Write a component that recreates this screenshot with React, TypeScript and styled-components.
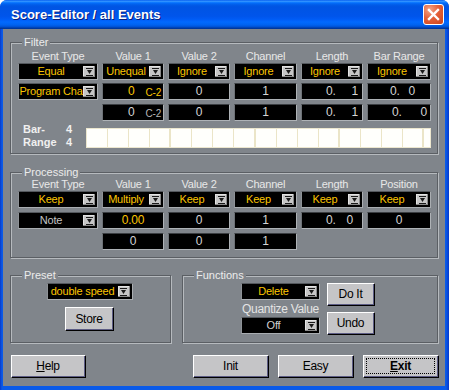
import React from "react";
import styled, { createGlobalStyle } from "styled-components";

const GRAY = "#80858b";
const YELLOW = "#fcc600";
const PALE = "#d4d4d4";
const FONT = `"Liberation Sans", Arial, sans-serif`;

const GlobalStyle = createGlobalStyle`
  html, body { margin: 0; padding: 0; background: #ffffff; }
  body { font-family: ${FONT}; }
`;

const Window = styled.div`
  width: 449px;
  height: 390px;
  display: flex;
  flex-direction: column;
  background: linear-gradient(to right, #0838c8 0, #0a5ae8 2px, #0a5ae8 446px, #0838c8 449px);
  border-radius: 7px 7px 0 0;
  overflow: hidden;
`;

const TitleBar = styled.div`
  height: 29px;
  flex: none;
  display: flex;
  align-items: center;
  justify-content: space-between;
  padding: 0 5px 0 11px;
  background: linear-gradient(
    to bottom,
    #0058ee 0%,
    #3593ff 4%,
    #288eff 6%,
    #127dff 8%,
    #036ffc 10%,
    #0262ee 14%,
    #0057e5 20%,
    #0054e3 24%,
    #0055eb 56%,
    #005bf5 66%,
    #026afe 76%,
    #0062ef 86%,
    #0052d6 92%,
    #0040ab 96%,
    #003092 100%
  );
`;

const Title = styled.span`
  font: bold 13px ${FONT};
  color: #ffffff;
  text-shadow: 1px 1px 0 #0a1e7a;
`;

const CloseBtn = styled.div`
  width: 21px;
  height: 21px;
  box-sizing: border-box;
  border: 1px solid #ffffff;
  border-radius: 3px;
  background: radial-gradient(circle at 30% 25%, #f4a486 0%, #e4613a 45%, #cc4219 100%);
  display: flex;
  align-items: center;
  justify-content: center;
`;

const Client = styled.div`
  flex: 1;
  margin: 0 4px 4px 3px;
  background: ${GRAY};
  display: flex;
  flex-direction: column;
  padding: 13px 7px 8px 7px;
`;

const Group = styled.div<{ $pt: number; $pb?: number; $mt?: number; $h?: number }>`
  position: relative;
  border: 1px solid #5b5f64;
  box-shadow: inset 1px 1px 0 #b6babe, 1px 1px 0 #b6babe;
  padding: ${(p) => p.$pt}px 6px ${(p) => p.$pb ?? 0}px 7px;
  margin-top: ${(p) => p.$mt ?? 0}px;
  ${(p) => (p.$h ? `height: ${p.$h}px; box-sizing: border-box;` : "")}
`;

const Legend = styled.span`
  position: absolute;
  top: -7px;
  left: 11px;
  padding: 0 2px;
  background: ${GRAY};
  color: #ececec;
  font-size: 11px;
  line-height: 12px;
`;

const ColGrid = styled.div<{ $rows: string }>`
  display: grid;
  grid-template-columns: 80px 62px 62px 63px 62px 64px;
  grid-template-rows: ${(p) => p.$rows};
  column-gap: 4px;
  align-items: start;
`;

const Head = styled.div`
  align-self: center;
  color: #e8e8e8;
  font-size: 11px;
  letter-spacing: -0.2px;
  line-height: 12px;
  text-align: center;
  white-space: nowrap;
`;

const DropFrame = styled.div<{ $w?: number }>`
  ${(p) => (p.$w ? `width: ${p.$w}px;` : "")}
  height: 17px;
  box-sizing: border-box;
  display: flex;
  align-items: center;
  background: #000000;
  border: 1px solid #a9adb1;
  border-top-color: #54585d;
  border-left-color: #8e9297;
  padding: 0 2px 0 0;
`;

const DropText = styled.span<{ $color: string }>`
  flex: 1;
  min-width: 0;
  overflow: hidden;
  white-space: nowrap;
  text-align: center;
  color: ${(p) => p.$color};
  font-size: 11px;
  letter-spacing: -0.2px;
  line-height: 15px;
`;

const ArrowBtn = styled.span`
  flex: none;
  width: 12px;
  height: 11px;
  background: #c6c6c6;
  box-shadow: inset -1px -1px 0 #8a8a8a, inset 1px 1px 0 #e4e4e4;
  display: flex;
  align-items: center;
  justify-content: center;
`;

const Field = styled.div<{ $justify?: string; $pl?: number; $pr?: number; $gap?: number; $color?: string }>`
  height: 17px;
  box-sizing: border-box;
  background: #000000;
  border: 1px solid #aeb2b6;
  border-top-color: #3b3e42;
  border-left-color: #6e7277;
  display: flex;
  align-items: center;
  justify-content: ${(p) => p.$justify ?? "center"};
  padding: 0 ${(p) => p.$pr ?? 0}px 0 ${(p) => p.$pl ?? 0}px;
  gap: ${(p) => p.$gap ?? 0}px;
  color: ${(p) => p.$color ?? PALE};
  font-size: 12px;
  letter-spacing: -0.2px;
  line-height: 15px;
  white-space: nowrap;
`;

const Note = styled.span<{ $color: string }>`
  align-self: flex-end;
  font-size: 10px;
  line-height: 12px;
  color: ${(p) => p.$color};
`;

const BarRow = styled.div`
  display: flex;
  margin-top: 3px;
  height: 20px;
`;

const BarLabels = styled.div`
  width: 68px;
  flex: none;
  display: grid;
  grid-template-columns: 43px auto;
  grid-template-rows: 13px 13px;
  margin-top: -5px;
  padding-left: 5px;
  box-sizing: border-box;
  color: #f0f0f0;
  font: bold 11px ${FONT};
  line-height: 13px;
`;

const Strip = styled.div`
  flex: 1;
  display: grid;
  grid-template-columns: repeat(16, 1fr) 6px;
  background: #fffffc;
  border: 1px solid #ece7cf;
`;

const StripCell = styled.span<{ $major: boolean }>`
  border-right: ${(p) => (p.$major ? 2 : 1)}px solid #ebe5c8;
`;

const Row = styled.div`
  display: flex;
  gap: 11px;
  margin-top: 17px;
`;

const PresetBody = styled.div`
  display: flex;
  flex-direction: column;
  align-items: center;
  gap: 7px;
  margin-left: -3px;
`;

const FuncBody = styled.div`
  display: flex;
  gap: 7px;
  padding-left: 51px;
`;

const FuncCol = styled.div`
  display: flex;
  flex-direction: column;
  width: 79px;
`;

const FuncLabel = styled.div`
  height: 17px;
  line-height: 18px;
  text-align: center;
  color: #e4e4e4;
  font-size: 12px;
  letter-spacing: -0.3px;
  white-space: nowrap;
`;

const BtnCol = styled.div`
  display: flex;
  flex-direction: column;
  gap: 6px;
`;

const Btn = styled.div<{ $w: number; $h: number; $bold?: boolean }>`
  width: ${(p) => p.$w}px;
  height: ${(p) => p.$h}px;
  box-sizing: border-box;
  background: #c5c5c7;
  border: 1px solid;
  border-color: #ffffff #000000 #000000 #ffffff;
  box-shadow: inset -1px -1px 0 #5c5c84;
  display: flex;
  align-items: center;
  justify-content: center;
  padding: 2px 3px 3px 2px;
  color: #000000;
  font-size: 12px;
  font-weight: ${(p) => (p.$bold ? "bold" : "normal")};
  letter-spacing: -0.3px;
`;

const Focus = styled.span`
  flex: 1;
  align-self: stretch;
  display: flex;
  align-items: center;
  justify-content: center;
  border: 1px dotted #000000;
`;

const BottomBar = styled.div`
  display: flex;
  align-items: center;
  margin: auto -1px 0 1px;
`;

const RightBtns = styled.div`
  display: flex;
  gap: 9px;
  margin-left: auto;
`;

const Arrow = () => (
  <svg width="7" height="8" viewBox="0 0 7 8">
    <rect x="0" y="0" width="7" height="1" fill="#1a1a1a" />
    <path d="M1 2h5L3.5 6z" fill="#1a1a1a" />
    <rect x="0" y="7" width="7" height="1" fill="#1a1a1a" />
  </svg>
);

type DropProps = { value: string; color?: string; w?: number };

const Drop = ({ value, color = YELLOW, w }: DropProps) => (
  <DropFrame $w={w}>
    <DropText $color={color}>{value}</DropText>
    <ArrowBtn>
      <Arrow />
    </ArrowBtn>
  </DropFrame>
);

const filterHeads = ["Event Type", "Value 1", "Value 2", "Channel", "Length", "Bar Range"];
const procHeads = ["Event Type", "Value 1", "Value 2", "Channel", "Length", "Position"];

export default function App() {
  return (
    <>
      <GlobalStyle />
      <Window>
        <TitleBar>
          <Title>Score-Editor / all Events</Title>
          <CloseBtn>
            <svg width="13" height="13" viewBox="0 0 13 13">
              <path d="M2 2L11 11M11 2L2 11" stroke="#ffffff" strokeWidth="2.4" strokeLinecap="square" />
            </svg>
          </CloseBtn>
        </TitleBar>

        <Client>
          <Group $pt={6} $pb={5}>
            <Legend>Filter</Legend>
            <ColGrid $rows="14px 20px 21px 21px">
              {filterHeads.map((h) => (
                <Head key={h}>{h}</Head>
              ))}

              <Drop value="Equal" />
              <Drop value="Unequal" />
              <Drop value="Ignore" />
              <Drop value="Ignore" />
              <Drop value="Ignore" />
              <Drop value="Ignore" />

              <Drop value="Program Cha" />
              <Field $justify="flex-end" $pr={2} $gap={11} $color={YELLOW}>
                <span>0</span>
                <Note $color={YELLOW}>C-2</Note>
              </Field>
              <Field>0</Field>
              <Field>1</Field>
              <Field $justify="space-between" $pl={24} $pr={4}>
                <span>0.</span>
                <span>1</span>
              </Field>
              <Field $justify="space-between" $pl={22} $pr={15}>
                <span>0.</span>
                <span>0</span>
              </Field>

              <span />
              <Field $justify="flex-end" $pr={2} $gap={11}>
                <span>0</span>
                <Note $color="#b8b8b8">C-2</Note>
              </Field>
              <Field>0</Field>
              <Field>1</Field>
              <Field $justify="space-between" $pl={24} $pr={4}>
                <span>0.</span>
                <span>1</span>
              </Field>
              <Field $justify="space-between" $pl={24} $pr={3}>
                <span>0.</span>
                <span>0</span>
              </Field>
            </ColGrid>

            <BarRow>
              <BarLabels>
                <span>Bar-</span>
                <span>4</span>
                <span>Range</span>
                <span>4</span>
              </BarLabels>
              <Strip>
                {Array.from({ length: 16 }, (_, i) => (
                  <StripCell key={i} $major={i % 4 === 3} />
                ))}
                <span />
              </Strip>
            </BarRow>
          </Group>

          <Group $pt={4} $pb={3} $mt={18}>
            <Legend>Processing</Legend>
            <ColGrid $rows="14px 21px 21px 21px">
              {procHeads.map((h) => (
                <Head key={h}>{h}</Head>
              ))}

              <Drop value="Keep" />
              <Drop value="Multiply" />
              <Drop value="Keep" />
              <Drop value="Keep" />
              <Drop value="Keep" />
              <Drop value="Keep" />

              <Drop value="Note" color="#c4c4c4" />
              <Field $color={YELLOW}>0.00</Field>
              <Field>0</Field>
              <Field>1</Field>
              <Field $justify="flex-start" $pl={24} $gap={11}>
                <span>0.</span>
                <span>0</span>
              </Field>
              <Field>0</Field>

              <span />
              <Field>0</Field>
              <Field>0</Field>
              <Field>1</Field>
            </ColGrid>
          </Group>

          <Row>
            <div style={{ width: 161 }}>
              <Group $pt={7} $h={68}>
                <Legend>Preset</Legend>
                <PresetBody>
                  <Drop value="double speed" w={86} />
                  <Btn $w={49} $h={24}>Store</Btn>
                </PresetBody>
              </Group>
            </div>
            <div style={{ flex: 1 }}>
              <Group $pt={7} $h={68}>
                <Legend>Functions</Legend>
                <FuncBody>
                  <FuncCol>
                    <Drop value="Delete" />
                    <FuncLabel>Quantize Value</FuncLabel>
                    <Drop value="Off" color="#d0d0d0" />
                  </FuncCol>
                  <BtnCol>
                    <Btn $w={48} $h={23}>Do It</Btn>
                    <Btn $w={48} $h={23}>Undo</Btn>
                  </BtnCol>
                </FuncBody>
              </Group>
            </div>
          </Row>

          <BottomBar>
            <Btn $w={75} $h={23}>
              <span>
                <u>H</u>elp
              </span>
            </Btn>
            <RightBtns>
              <Btn $w={76} $h={23}>Init</Btn>
              <Btn $w={76} $h={23}>Easy</Btn>
              <Btn $w={76} $h={23} $bold>
                <Focus>
                  <span>
                    <u>E</u>xit
                  </span>
                </Focus>
              </Btn>
            </RightBtns>
          </BottomBar>
        </Client>
      </Window>
    </>
  );
}
